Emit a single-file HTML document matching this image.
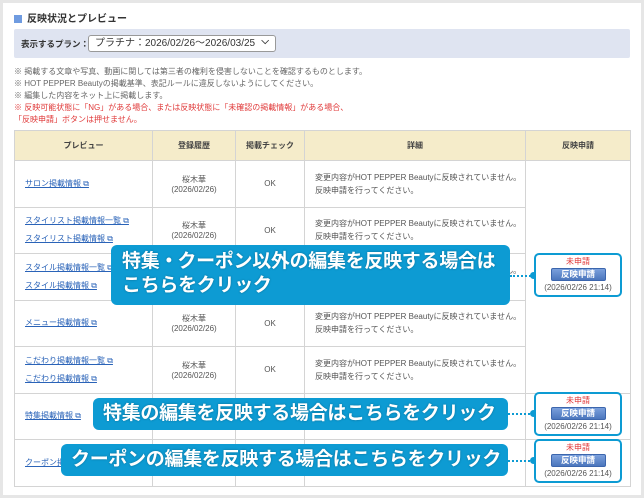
<!DOCTYPE html>
<html><head><meta charset="utf-8"><style>
*{margin:0;padding:0;box-sizing:border-box}
body{width:644px;height:498px;background:#e6e6e6;font-family:"Liberation Sans","Noto Sans CJK JP",sans-serif;position:relative;overflow:hidden;color:#444}
.panel{position:absolute;left:3px;top:3px;width:638px;height:492px;background:#fff}
.abs{position:absolute}
.title{left:14px;top:10px;font-size:10px;font-weight:bold;color:#333}
.title:before{content:"";display:inline-block;width:8px;height:8px;background:#6f9be0;margin-right:5px;vertical-align:-1px}
.plan{left:14px;top:29px;width:616px;height:29px;background:#dfe4f1;border-radius:2px}
.plan .lbl{position:absolute;left:7px;top:9px;font-size:8.5px;font-weight:bold;color:#333}
.plan .sel{position:absolute;left:74px;top:6px;width:188px;height:17px;background:#fff;border:1px solid #999;border-radius:3px;font-size:10px;color:#333;padding:1px 0 0 6px;line-height:14px;white-space:nowrap}
.notes{left:14px;top:66px;font-size:8px;line-height:12px;color:#666}
.notes .r{color:#e03a3a}
table{position:absolute;left:14px;top:130px;border-collapse:collapse;font-size:8px}
td,th{border:1.5px solid #d4d4d4;vertical-align:middle}
th{background:#f5ecca;height:30px;font-weight:bold;color:#444;font-size:8px}
td{height:46.5px}
td.c{text-align:center;color:#555}
td.p{padding-left:10px;color:#2a63b8;line-height:18px}
td.p span{text-decoration:underline}
td.p span:after{content:" ⧉";text-decoration:none;font-size:8px}
td.d{padding-left:10px;color:#555;line-height:13px}
.call{position:absolute;background:#0d9bd3;border-radius:6px;color:#fff;font-weight:bold;font-size:19px;line-height:24px;white-space:nowrap;letter-spacing:-0.3px;text-shadow:0 0 2px rgba(0,0,0,.3)}
.dots{position:absolute;border-top:2.5px dotted #0d9bd3;height:0}
.dot{position:absolute;width:7px;height:7px;border-radius:50%;background:#0d9bd3}
.box{position:absolute;left:534px;width:88px;border:2px solid #0d9bd3;border-radius:5px;background:#fff;text-align:center}
.box .st{color:#e03a3a;font-size:8px;line-height:11px;margin-top:1px}
.box .bt{display:block;margin:1px auto 0;width:55px;height:13px;background:linear-gradient(#7aa0dc,#4c76bd);border:1px solid #3c66ad;border-radius:2px;color:#fff;font-size:8.5px;font-weight:bold;line-height:11px}
.box .dt{font-size:8px;color:#555;line-height:11px;margin-top:1px}
</style></head><body>
<div class="panel"></div>
<div class="abs title">反映状況とプレビュー</div>
<div class="abs plan"><div class="lbl">表示するプラン：</div><div class="sel">プラチナ：2026/02/26〜2026/03/25<span style="position:absolute;right:6px;top:-1px;font-size:10px;font-weight:bold">⌵</span></div></div>
<div class="abs notes">※ 掲載する文章や写真、動画に関しては第三者の権利を侵害しないことを確認するものとします。<br>※ HOT PEPPER Beautyの掲載基準、表記ルールに違反しないようにしてください。<br>※ 編集した内容をネット上に掲載します。<br><span class="r">※ 反映可能状態に「NG」がある場合、または反映状態に「未確認の掲載情報」がある場合、<br>「反映申請」ボタンは押せません。</span></div>
<table>
<tr><th style="width:138px">プレビュー</th><th style="width:83px">登録履歴</th><th style="width:69px">掲載チェック</th><th style="width:221px">詳細</th><th style="width:105px">反映申請</th></tr>
<tr><td class="p"><span>サロン掲載情報</span></td><td class="c">桜木華<br>(2026/02/26)</td><td class="c">OK</td><td class="d">変更内容がHOT PEPPER Beautyに反映されていません。<br>反映申請を行ってください。</td><td rowspan="5"></td></tr>
<tr><td class="p"><span>スタイリスト掲載情報一覧</span><br><span>スタイリスト掲載情報</span></td><td class="c">桜木華<br>(2026/02/26)</td><td class="c">OK</td><td class="d">変更内容がHOT PEPPER Beautyに反映されていません。<br>反映申請を行ってください。</td></tr>
<tr><td class="p"><span>スタイル掲載情報一覧</span><br><span>スタイル掲載情報</span></td><td class="c">桜木華<br>(2026/02/26)</td><td class="c">OK</td><td class="d">変更内容がHOT PEPPER Beautyに反映されていません。<br>反映申請を行ってください。</td></tr>
<tr><td class="p"><span>メニュー掲載情報</span></td><td class="c">桜木華<br>(2026/02/26)</td><td class="c">OK</td><td class="d">変更内容がHOT PEPPER Beautyに反映されていません。<br>反映申請を行ってください。</td></tr>
<tr><td class="p"><span>こだわり掲載情報一覧</span><br><span>こだわり掲載情報</span></td><td class="c">桜木華<br>(2026/02/26)</td><td class="c">OK</td><td class="d">変更内容がHOT PEPPER Beautyに反映されていません。<br>反映申請を行ってください。</td></tr>
<tr><td class="p"><span>特集掲載情報</span></td><td class="c"></td><td class="c"></td><td class="d"></td><td></td></tr>
<tr><td class="p"><span>クーポン掲載情報</span></td><td class="c"></td><td class="c"></td><td class="d"></td><td></td></tr>
</table>

<div class="call" style="left:111px;top:245px;width:399px;height:60px;padding:5px 0 0 11px">特集<span style="letter-spacing:-6px">・</span> クーポン以外の編集を反映する場合は<br>こちらをクリック</div>
<div class="dots" style="left:510px;top:275px;width:24px"></div><div class="dot" style="left:530px;top:272px"></div>
<div class="box" style="top:253px;height:44px"><div class="st">未申請</div><div class="bt">反映申請</div><div class="dt">(2026/02/26 21:14)</div></div>

<div class="call" style="left:93px;top:398px;width:415px;height:32px;padding:4px 0 0 10px">特集の編集を反映する場合はこちらをクリック</div>
<div class="dots" style="left:508px;top:413px;width:26px"></div><div class="dot" style="left:530px;top:410px"></div>
<div class="box" style="top:392px;height:44px"><div class="st">未申請</div><div class="bt">反映申請</div><div class="dt">(2026/02/26 21:14)</div></div>

<div class="call" style="left:61px;top:444px;width:447px;height:32px;padding:4px 0 0 10px">クーポンの編集を反映する場合はこちらをクリック</div>
<div class="dots" style="left:508px;top:460px;width:26px"></div><div class="dot" style="left:530px;top:457px"></div>
<div class="box" style="top:439px;height:44px"><div class="st">未申請</div><div class="bt">反映申請</div><div class="dt">(2026/02/26 21:14)</div></div>
</body></html>
